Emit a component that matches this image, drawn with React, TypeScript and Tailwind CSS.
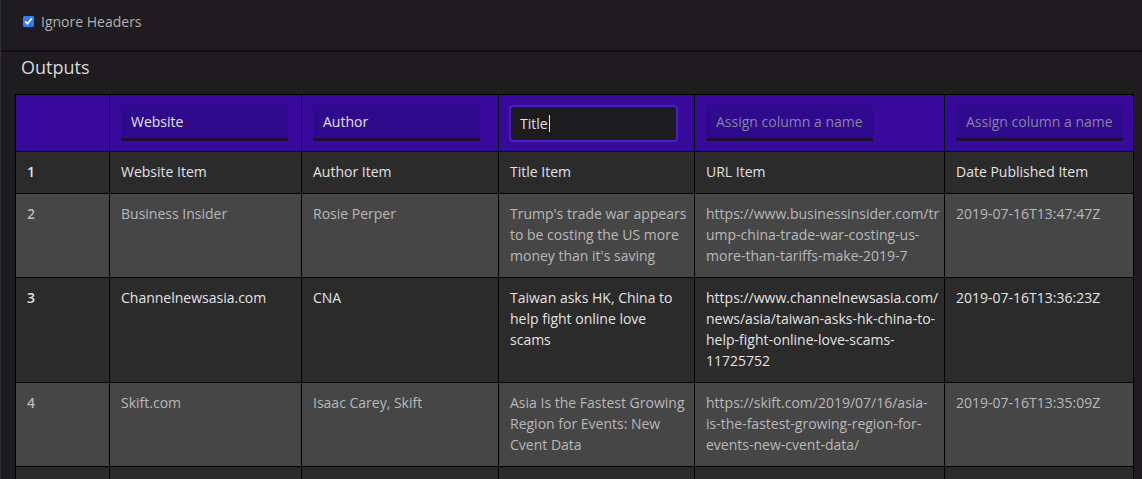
import React from "react";

type Row = { n: number; cells: string[][] };

const rows: Row[] = [
  { n: 1, cells: [["Website Item"], ["Author Item"], ["Title Item"], ["URL Item"], ["Date Published Item"]] },
  {
    n: 2,
    cells: [
      ["Business Insider"],
      ["Rosie Perper"],
      ["Trump's trade war appears", "to be costing the US more", "money than it's saving"],
      ["https://www.businessinsider.com/tr", "ump-china-trade-war-costing-us-", "more-than-tariffs-make-2019-7"],
      ["2019-07-16T13:47:47Z"],
    ],
  },
  {
    n: 3,
    cells: [
      ["Channelnewsasia.com"],
      ["CNA"],
      ["Taiwan asks HK, China to", "help fight online love", "scams"],
      ["https://www.channelnewsasia.com/", "news/asia/taiwan-asks-hk-china-to-", "help-fight-online-love-scams-", "11725752"],
      ["2019-07-16T13:36:23Z"],
    ],
  },
  {
    n: 4,
    cells: [
      ["Skift.com"],
      ["Isaac Carey, Skift"],
      ["Asia Is the Fastest Growing", "Region for Events: New", "Cvent Data"],
      ["https://skift.com/2019/07/16/asia-", "is-the-fastest-growing-region-for-", "events-new-cvent-data/"],
      ["2019-07-16T13:35:09Z"],
    ],
  },
];

const headers = ["Website", "Author", "Title", "", ""];

export default function App() {
  return (
    <div
      className="min-h-screen bg-[#1e1c1f] border-l border-[#2e2d30] overflow-hidden"
      style={{ fontFamily: '"Open Sans", "Noto Sans", sans-serif' }}
    >
      <div className="h-[50px] flex items-start pt-[11px] pl-[22px] gap-[7px]">
        <input type="checkbox" defaultChecked className="w-[11px] h-[11px] mt-[5px] accent-[#2f7cf6]" />
        <span className="text-[14px] leading-[21px] text-[#b2b0b4]">Ignore Headers</span>
      </div>
      <div className="h-[2px] bg-[#150a1b]" />
      <div className="pl-[14px]">
        <h2 className="text-[18px] leading-[27px] text-[#d9d8da] pl-[6px] h-[42px] pt-[2px]">Outputs</h2>
        <table className="table-fixed border-collapse border border-black w-[1119px] text-[14px] leading-[21px]">
          <colgroup>
            <col className="w-[94px]" />
            <col className="w-[192px]" />
            <col className="w-[197px]" />
            <col className="w-[196px]" />
            <col className="w-[250px]" />
            <col className="w-[189px]" />
          </colgroup>
          <thead>
            <tr className="bg-[#370a9c] h-[57px]">
              <th className="border border-black" />
              {headers.map((h, i) => (
                <th key={i} className="border border-black px-[11px] text-left font-normal align-middle">
                  {i === 2 ? (
                    <div className="w-[169px] h-[37px] rounded-[4px] border-2 border-[#4a1fc2] bg-[#1c1b1e] flex items-center pl-[9px] text-[#e6e4e8] -ml-[1px]">
                      Title<span className="inline-block w-[1px] h-[17px] bg-[#e6e4e8] ml-[1px]" />
                    </div>
                  ) : (
                    <div className="w-[167px] h-[36px] bg-[#2f0a8c] border-b-[3px] border-[#1d0f38] rounded-t-[2px] flex items-center pl-[10px]">
                      {h ? (
                        <span className="text-[#e4e0f0]">{h}</span>
                      ) : (
                        <span className="text-[#8a80a8]">Assign column a name</span>
                      )}
                    </div>
                  )}
                </th>
              ))}
            </tr>
          </thead>
          <tbody>
            {rows.map((r) => {
              const even = r.n % 2 === 0;
              return (
                <tr key={r.n} className={even ? "bg-[#464646] text-[#b9b8ba]" : "bg-[#2b2b2b] text-[#e3e2e4]"}>
                  <td className="border border-black px-[11px] pt-[9px] pb-[11px] align-top font-semibold">{r.n}</td>
                  {r.cells.map((c, i) => (
                    <td key={i} className="border border-black px-[11px] pt-[9px] pb-[11px] align-top whitespace-nowrap">
                      {c.map((line, j) => (
                        <div key={j}>{line}</div>
                      ))}
                    </td>
                  ))}
                </tr>
              );
            })}
            <tr className="bg-[#2b2b2b] h-[42px]">
              {[0, 1, 2, 3, 4, 5].map((i) => (
                <td key={i} className="border border-black" />
              ))}
            </tr>
          </tbody>
        </table>
      </div>
    </div>
  );
}
